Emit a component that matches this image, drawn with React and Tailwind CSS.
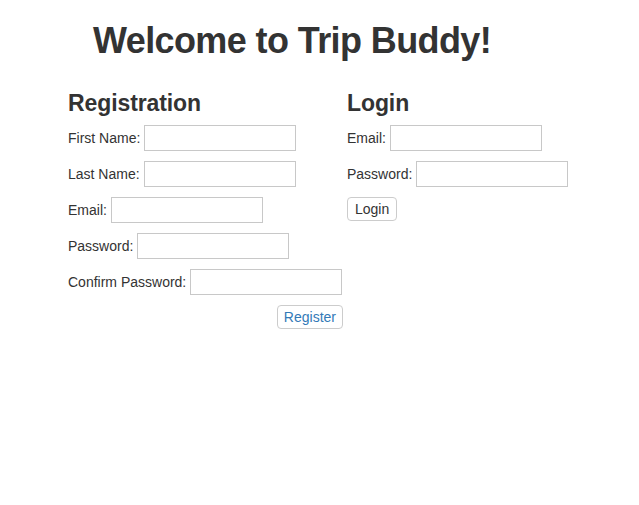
export default function App() {
  const font = { fontFamily: '"Liberation Sans", Arial, sans-serif' };
  const Input = ({ w = "w-[152px]" }) => (
    <input
      className={`${w} h-[26px] border border-[#c8c8c8] bg-white outline-none`}
      type="text"
    />
  );
  const Row = ({ label, mb = "mb-[10px]" }) => (
    <div className={`flex items-center gap-[4px] ${mb}`}>
      <span className="text-[14px] leading-[20px] text-[#333]">{label}</span>
      <Input />
    </div>
  );
  return (
    <div className="w-[639px] h-[505px] bg-white text-[#333]" style={font}>
      <h1 className="pl-[93px] pt-[21px] text-[36px] leading-[40px] font-bold tracking-[-0.6px] text-[#333]">
        Welcome to Trip Buddy!
      </h1>
      <div className="flex pl-[68px] pt-[29px]">
        <div className="w-[279px] flex flex-col">
          <h2 className="text-[23px] leading-[26px] font-bold mb-[9px] tracking-[-0.1px]">
            Registration
          </h2>
          <Row label="First Name:" />
          <Row label="Last Name:" />
          <Row label="Email:" />
          <Row label="Password:" />
          <Row label="Confirm Password:" />
          <div className="w-[275px] flex justify-end">
            <button className="h-[24px] px-[6px] rounded-[4px] border border-[#ccc] bg-white text-[14px] text-[#337ab7] leading-[20px]">
              Register
            </button>
          </div>
        </div>
        <div className="flex flex-col">
          <h2 className="text-[23px] leading-[26px] font-bold mb-[9px] tracking-[-0.1px]">
            Login
          </h2>
          <Row label="Email:" />
          <Row label="Password:" />
          <div>
            <button className="h-[24px] px-[7px] rounded-[4px] border border-[#ccc] bg-white text-[14px] text-[#333] leading-[20px]">
              Login
            </button>
          </div>
        </div>
      </div>
    </div>
  );
}
